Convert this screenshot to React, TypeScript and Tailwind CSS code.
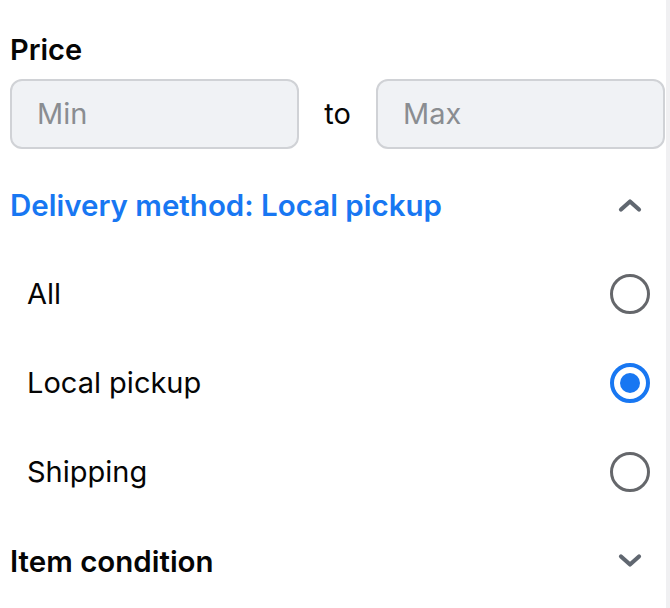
import { useState } from "react";

const options = ["All", "Local pickup", "Shipping"];

function Chevron({ up }: { up?: boolean }) {
  return (
    <svg width="26" height="16" viewBox="0 0 26 16" className={up ? "" : "rotate-180"}>
      <polyline
        points="4,12.5 13,4.5 22,12.5"
        fill="none"
        stroke="#606770"
        strokeWidth="4.2"
        strokeLinecap="round"
        strokeLinejoin="round"
      />
    </svg>
  );
}

function Radio({ checked }: { checked: boolean }) {
  if (checked) {
    return (
      <span className="flex size-[40px] items-center justify-center rounded-full border-[4px] border-[#1877f2]">
        <span className="size-[20px] rounded-full bg-[#1877f2]" />
      </span>
    );
  }
  return <span className="block size-[40px] rounded-full border-[3px] border-[#65676b]" />;
}

export default function App() {
  const [selected, setSelected] = useState("Local pickup");

  return (
    <div
      className="flex h-[608px] w-[670px] bg-white text-[#050505]"
      style={{ fontFamily: "Inter, 'Noto Sans', sans-serif" }}
    >
      <div className="flex-1 pl-[10px] pr-[1px] pt-[32px]">
        <p className="text-[29px] leading-[36px] font-semibold">Price</p>
        <div className="mt-[11px] flex items-center">
          <div className="flex h-[70px] w-[289px] items-center rounded-[12px] border-2 border-[#d0d2d6] bg-[#f0f2f5] px-[25px] text-[29px] text-[#8a8d91]">
            Min
          </div>
          <span className="flex-1 text-center text-[29px]">to</span>
          <div className="flex h-[70px] w-[289px] items-center rounded-[12px] border-2 border-[#d0d2d6] bg-[#f0f2f5] px-[25px] text-[29px] text-[#8a8d91]">
            Max
          </div>
        </div>

        <div className="mt-[12px] flex h-[88px] items-center justify-between pr-[22px]">
          <span className="text-[29.5px] font-semibold text-[#1877f2]">
            Delivery method: Local pickup
          </span>
          <Chevron up />
        </div>

        {options.map((opt) => (
          <button
            key={opt}
            onClick={() => setSelected(opt)}
            className="flex h-[89px] w-full items-center justify-between pl-[17px] pr-[15px]"
          >
            <span className="text-[29px]">{opt}</span>
            <Radio checked={selected === opt} />
          </button>
        ))}

        <div className="flex h-[90px] items-center justify-between pr-[22px]">
          <span className="text-[29.5px] font-semibold">Item condition</span>
          <Chevron />
        </div>
      </div>
      <div className="w-[4px] bg-[#f0f0f2]" />
    </div>
  );
}
